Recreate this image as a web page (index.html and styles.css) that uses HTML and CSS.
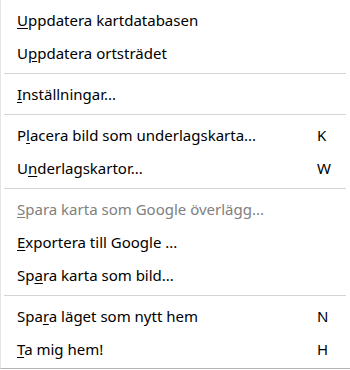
FILE: index.html
```html
<!DOCTYPE html>
<html lang="sv">
  <head>
    <meta charset="UTF-8" />
    <title>Meny</title>
    <link rel="stylesheet" href="styles.css">
  </head>
  <body>
    <div class="menu">
      <div class="item"><span class="label"><u>U</u>ppdatera kartdatabasen</span><span class="key"></span></div>
      <div class="item"><span class="label">U<u>p</u>pdatera ortsträdet</span><span class="key"></span></div>
      <div class="sep"></div>
      <div class="item"><span class="label"><u>I</u>nställningar...</span><span class="key"></span></div>
      <div class="sep"></div>
      <div class="item"><span class="label">P<u>l</u>acera bild som underlagskarta...</span><span class="key">K</span></div>
      <div class="item"><span class="label">U<u>n</u>derlagskartor...</span><span class="key">W</span></div>
      <div class="sep"></div>
      <div class="item disabled"><span class="label"><u>S</u>para karta som Google överlägg...</span><span class="key"></span></div>
      <div class="item"><span class="label"><u>E</u>xportera till Google ...</span><span class="key"></span></div>
      <div class="item"><span class="label">Sp<u>a</u>ra karta som bild...</span><span class="key"></span></div>
      <div class="sep"></div>
      <div class="item"><span class="label">Spa<u>r</u>a läget som nytt hem</span><span class="key">N</span></div>
      <div class="item"><span class="label"><u>T</u>a mig hem!</span><span class="key">H</span></div>
    </div>
  </body>
</html>
```

FILE: styles.css
```css
* {
  box-sizing: border-box;
}

body {
  margin: 0;
  background-color: #fff;
  font-family: "Noto Sans", "Open Sans", sans-serif;
}

.menu {
  width: 350px;
  height: 369px;
  padding: 3px 0 3px 0;
  border-left: 1px solid #e6e6e6;
  border-bottom: 1px solid #b4b4b4;
  background-color: #fff;
}

.item {
  display: flex;
  align-items: center;
  height: 33px;
  padding-left: 16px;
  font-size: 15px;
  color: #000;
}

.item .label {
  flex: 1;
  white-space: nowrap;
}

.item .key {
  width: 34px;
  padding-left: 1px;
}

.item u {
  text-decoration-thickness: 1px;
  text-underline-offset: 2px;
}

.item.disabled {
  color: #808080;
}

.sep {
  height: 1px;
  margin: 4px 4px 3px 3px;
  background-color: #d5d5d5;
}
```
